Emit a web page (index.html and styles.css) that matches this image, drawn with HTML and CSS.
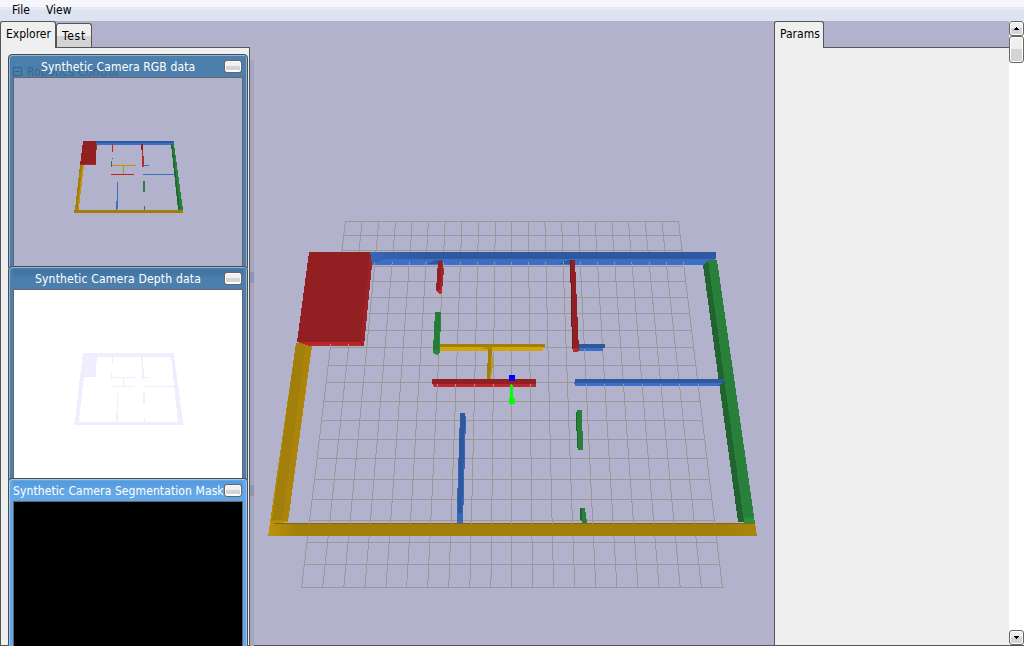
FILE: index.html
```html
<!DOCTYPE html>
<html lang="en">
<head>
<meta charset="utf-8">
<title>Example Browser</title>
<link rel="stylesheet" href="styles.css">
</head>
<body>
<nav class="menu"><span class="file">File</span><span class="view">View</span></nav>
<main class="workspace">
  <aside class="explorer">
    <div class="tabs">
      <div class="tab active explorer-tab">Explorer</div>
      <div class="tab test-tab">Test</div>
    </div>
    <div class="pane"></div>
    <div class="shadow"><i></i><i></i></div>
    <section class="window rgb">
      <header><span class="ghost"><svg width="10" height="10" viewBox="0 0 10 10"><path d="M.5.5h8v8h-8zM2 4.500h5" fill="none" stroke="#2f648e"/></svg><b>Robotics Control</b></span><span class="title t1">Synthetic Camera RGB data</span><i class="min"></i></header>
      <div class="client">
        <svg class="thumb" width="228" height="188" viewBox="14 78 228 188">
          <defs>
          <g id="plan" transform="translate(60 130) scale(.33333)">
            <path class="blue" d="M108 33H342V40H108z"/><path class="blue2" d="M108 40H342V45H108z"/>
            <path class="green" d="M333 42H342L369 240H354z"/><path class="dgreen" d="M333 42H337L360 238H355z"/>
            <path class="gold" d="M60 104H72L56 240H45z"/><path class="gold2" d="M67 104H72L56 238H52z"/>
            <path class="red" d="M69 33H108V105H60z"/><path class="red2" d="M108 42h3v18h-3zM60 102h48v3H60z"/>
            <path class="red2" d="M156 42h3v24h-3zM246 42h3l3 68h-6zM153 132h69v3h-69z"/><path class="red" d="M243 42h6v18h-6z"/>
            <path class="green" d="M153 93h3v18h-3zM156 84h3v3h-3zM249 153h6v33h-6zM252 228h3v12h-3z"/>
            <path class="gold2" d="M156 105h72v3h-72zM189 106h3v26h-3z"/>
            <path class="blue2" d="M249 105h18v3h-18zM249 132h96v3h-96zM171 156h3v81h-3v3h-3v-27h3z"/>
            <path class="gold" d="M42 240H369V249H42z"/>
          </g>
          </defs>
          <use href="#plan"/>
        </svg>
      </div>
    </section>
    <section class="window depth">
      <header><span class="title t2">Synthetic Camera Depth data</span><i class="min"></i></header>
      <div class="client"><svg class="thumb" width="228" height="188" viewBox="14 78 228 188"><use href="#plan"/></svg></div>
    </section>
    <section class="window mask">
      <header><span class="title t3">Synthetic Camera Segmentation Mask</span><i class="min"></i></header>
      <div class="client"></div>
    </section>
  </aside>
  <section class="scene">
    <svg width="524" height="624" viewBox="250 21 524 624" shape-rendering="crispEdges">
      <defs>
        <clipPath id="ticks"><path d="M372 262H703V265H372zM320 344H372V347H320zM436 384H535V387H436zM577 384H720V387H577zM580 349H602V351H580zM300 522H716V524H300z"/></clipPath>
        <linearGradient id="front"><stop offset="0" stop-color="#bd930b"/><stop offset=".06" stop-color="#a27f0a"/><stop offset=".9" stop-color="#a27f0a"/><stop offset="1" stop-color="#aa850b"/></linearGradient>
        <linearGradient id="back"><stop offset="0" stop-color="#3866b8"/><stop offset=".16" stop-color="#2f599f"/></linearGradient>
        <g id="grid">
          <path d="M345 221.500H679M343 235.500H681M342 250.500H682M340 266.500H684M338 281.500H686M336 297.500H688M334 313.500H690M332 330.500H692M330 347.500H694M328 365.500H696M326 382.500H698M324 401.500H701M322 420.500H703M319 439.500H705M317 458.500H708M315 479.500H710M312 499.500H712M310 520.500H715M307 542.500H718M304 564.500H720M301 587.500H724"/>
          <path d="M345.500 221L301.500 588M362.200 221L322.600 588M378.900 221L343.700 588M395.600 221L364.800 588M412.300 221L385.900 588M428.500 221L406.500 588M445.200 221L427.600 588M461.900 221L448.700 588M478.600 221L469.800 588M495.300 221L490.900 588M511.500 221V588M528.200 221L532.600 588M544.900 221L553.700 588M561.600 221L574.800 588M578.300 221L595.900 588M595 221L617 588M611.700 221L638.100 588M628.400 221L659.200 588M645.100 221L680.300 588M661.800 221L701.400 588M678.500 221L722.500 588"/>
        </g>
      </defs>
      <use class="grid" href="#grid"/>
      <path fill="#3c6fca" d="M369 252H716V259L704 265H372L369 260z"/>
      <path fill="url(#back)" d="M369 252H716V259H369z"/>
      <path fill="#2f599f" d="M427 264L435 260H443V264zM558 264L568 260H574V264z"/>
      <path fill="#3464b5" d="M369 259H385L374 264L369 260z"/>
      <path fill="#21642f" d="M703 265L708 260L750 522H738z"/>
      <path fill="#28803a" d="M708 260H717L755 523H744z"/>
      <path fill="#b28b0b" d="M296 343H310L312 346L288 522H270z"/>
      <path fill="#a27f0a" d="M296 343H306L284 520H272z"/>
      <path fill="#ab850b" d="M306 346H311L288 521H282z"/>
      <path fill="#b9262c" d="M297 342H364V346H310z"/>
      <path fill="#921f21" d="M309 252H370L372 265L364 346H362L360 342H297z"/>
      <path fill="#9d2225" d="M370 254L372 265L364 346H361L360 342z"/>
      <path fill="#a92529" d="M438 261H442L444 270L442 292H437z"/><path fill="#921f21" d="M438 261H442L440 291H436z"/><path fill="#bd282d" d="M436 290H442V292L440 294L437 292z"/>
      <path fill="#258a3a" d="M435 312H441L440 352L437 355L433 353z"/><path fill="#287a38" d="M435 312H440L439 350H433z"/>
      <path fill="#d2a40d" d="M440 347H543V351H440z"/><path fill="#a27f0a" d="M440 344H545V347H440z"/><path fill="#b48d0c" d="M479 349L487 347H492V349z"/>
      <path fill="#a27f0a" d="M488 348H492L491 379H487z"/><path fill="#c2980d" d="M492 350L493 364L491 379H490z"/>
      <path fill="#bd282d" d="M432 382H536V387H434z"/><path fill="#921f21" d="M432 379H536V384H432z"/>
      <path fill="#ed1118" d="M490 385h7v1h-7z"/>
      <path fill="#3c6fca" d="M578 346H603V351H578zM574 382H724L718 386H575z"/><path fill="#2f599f" d="M579 344H605V348H579zM575 379H724V383H575z"/>
      <path fill="#74191b" d="M570 260L572 349H575L573 260z"/><path fill="#921f21" d="M571 260H575L579 351H573z"/><path fill="#bd282d" d="M573 348H578V352H573z"/>
      <path fill="#3866b8" d="M460 413L466 416L463 523H457V503z"/><path fill="#2f599f" d="M460 413H465L462 513H458z"/>
      <path fill="#21642f" d="M576 412L579 410L581 450L577 448z"/><path fill="#28803a" d="M577 410H582L583 450H578z"/>
      <path fill="#21642f" d="M580 508H583V523L580 520z"/><path fill="#28803a" d="M582 508H585L587 523H582z"/>
      <path fill="url(#front)" d="M270 523H755L757 536H268z"/><path fill="#826608" d="M274 523H755V524H274z"/>
      <path fill="#b9900b" d="M270 521L284 521V523H270z"/><path fill="#29913e" d="M744 518L754 517L755 523H744z"/>
      <use class="grid" href="#grid" clip-path="url(#ticks)"/>
      <path fill="#0f0" d="M510 385H513V398H515V404H509V398H510z"/><path fill="#00f" d="M509 375H515V381H509z"/>
    </svg>
  </section>
  <aside class="params">
    <div class="params-main">
      <div class="tabs"><div class="tab active params-tab">Params</div></div>
      <div class="pane"></div>
    </div>
    <div class="scrollbar"><span class="button"><svg width="5" height="3"><path d="M2 0h1v1h1v1h1v1H0V2h1V1h1z"/></svg></span><span class="handle"></span><span class="button down"><svg width="5" height="3"><path d="M0 0h5v1H4v1H3v1H2V2H1V1H0z"/></svg></span></div>
  </aside>
</main>
</body>
</html>
```
FILE: styles.css
```css
* { box-sizing: border-box; }
body { margin: 0; width: 1024px; height: 646px; overflow: hidden; display: flex; flex-direction: column; background: #b2b2cd; font: 12px/16px "DejaVu Sans Condensed", "DejaVu Sans", sans-serif; font-stretch: condensed; color: #000; }
.menu { height: 21px; flex: none; padding: 2px 0 0 12px; display: flex; gap: 16px; background: linear-gradient(#f5f7fc 7px, #e5eaf5 7px, #e5eaf5 10px, #dde3f0 10px); }
.file { width: 18px; }
.workspace { flex: 1; display: flex; min-height: 0; }
.explorer { position: relative; width: 250px; display: flex; flex-direction: column; }
.tabs { height: 26px; display: flex; align-items: flex-end; flex: none; }
.tab { border: 1px solid #555; border-bottom: 0; border-radius: 3px 3px 0 0; white-space: nowrap; position: relative; }
.tab.active { height: 27px; margin-bottom: -1px; z-index: 1; background: #efefef; padding: 4px 0 0 5px; }
.explorer-tab { width: 56px; }
.test-tab { width: 36px; height: 24px; padding: 4px 0 0 5px; letter-spacing: .7px; background: linear-gradient(#efefef 12px, #d4d4d4 12px); }
.pane { flex: 1; background: #efefef; border: 1px solid #555; }
.shadow { position: absolute; left: 250px; top: 39px; width: 4px; bottom: 0; background: #a5a5be; z-index: 1; }
.shadow i { position: absolute; left: 0; top: 212px; width: 4px; height: 11px; background: #9494ac; }
.shadow i + i { top: 425px; }
.window { position: absolute; left: 8px; width: 240px; height: 214px; padding: 0 4px; background: #4d7fad; border: 1px solid #4b4b50; border-radius: 4px 4px 0 0; box-shadow: inset 1px 1px #8fb6d8, inset -1px 0 #8fb6d8; display: flex; flex-direction: column; }
.rgb { top: 33px; }
.depth { top: 245px; }
.mask { top: 457px; height: 168px; border-bottom: 0; background: #64a7e6; box-shadow: inset 1px 1px #9bcaf5, inset -1px 0 #9bcaf5; }
.window header { height: 22px; display: flex; align-items: center; position: relative; color: #fff; flex: none; }
.depth header { background: linear-gradient(transparent 2px, #3f73a2 2px, #4479a8 10px, transparent 10px); }
.mask header { background: linear-gradient(transparent 2px, #559add 2px, #5ca1e2 10px, transparent 10px); }
.title { position: relative; white-space: nowrap; padding-top: 2px; }
.t1 { margin-left: 28px; letter-spacing: .12px; }
.t2 { margin-left: 22px; letter-spacing: .19px; }
.t3 { letter-spacing: .1px; }
.ghost { position: absolute; left: 0; top: 9px; display: flex; align-items: center; gap: 4px; color: #356790; letter-spacing: .2px; }
.ghost b { font-weight: 400; white-space: nowrap; }
.min { position: absolute; left: 211px; top: 5px; width: 18px; height: 13px; border: 1px solid #666; border-radius: 3px; background: linear-gradient(#f0f0f0 5px, #d4d4d4 5px, #d4d4d4 9px, #fff 9px); box-shadow: inset 0 0 0 1px #fff; }
.client { flex: 1; border: 1px solid #66666c; border-bottom: 0; background: #b2b2cd; overflow: hidden; }
.depth .client { background: #fff; }
.mask .client { background: #000; }
.thumb { display: block; shape-rendering: crispEdges; }
.blue { fill: var(--depth, #2f599f); }
.blue2 { fill: var(--depth, #3c6fc4); }
.green { fill: var(--depth, #28803a); }
.dgreen { fill: var(--depth, #21642f); }
.red { fill: var(--depth, #921f21); }
.red2 { fill: var(--depth, #b9262c); }
.gold { fill: var(--depth, #a27f0a); }
.gold2 { fill: var(--depth, #bd930b); }
.depth .thumb { --depth: #eeeeff; }
.scene { width: 524px; border-bottom: 1px solid #555; }
.scene svg { display: block; }
.grid { fill: none; stroke: #999; stroke-width: 1; }
.params { width: 250px; display: flex; }
.params-main { width: 235px; display: flex; flex-direction: column; }
.params-main .pane { border-right: 0; }
.params-tab { width: 50px; }
.scrollbar { width: 15px; background: #fff; display: flex; flex-direction: column; border-bottom: 1px solid #555; }
.button, .handle { width: 15px; height: 15px; border: 1px solid #666; border-radius: 3px; display: flex; align-items: center; justify-content: center; background: linear-gradient(#efefef 6px, #d4d4d4 6px); box-shadow: inset 0 0 0 1px #fff; flex: none; }
.handle { height: 27px; background: linear-gradient(#efefef 12px, #d4d4d4 12px); }
.down { margin-top: auto; }
```
